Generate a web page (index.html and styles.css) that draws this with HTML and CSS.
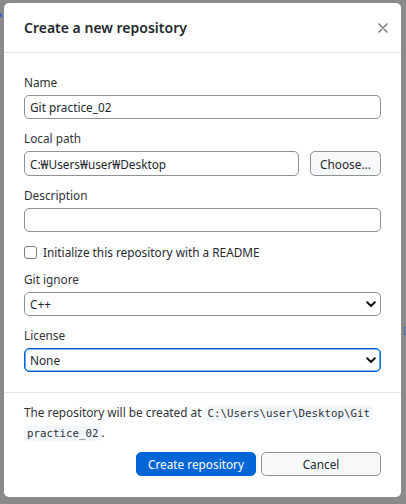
FILE: index.html
```html
<!DOCTYPE html>
<html>
  <head>
    <meta charset="UTF-8" />
    <title>Create a new repository</title>
    <link rel="stylesheet" href="styles.css">
  </head>
  <body>
    <div class="backdrop-marks">
      <span class="mark mark-left"></span>
      <span class="mark mark-right"></span>
    </div>
    <div class="dialog" role="dialog" aria-labelledby="dialog-title">
      <div class="dialog-header">
        <h1 id="dialog-title">Create a new repository</h1>
        <button class="close-button" aria-label="Close">
          <svg width="10" height="10" viewBox="0 0 10 10">
            <path d="M1 1 L9 9 M9 1 L1 9" stroke="#6e7073" stroke-width="1.4" stroke-linecap="round" fill="none"/>
          </svg>
        </button>
      </div>

      <form class="dialog-body">
        <div class="field">
          <label for="name">Name</label>
          <input id="name" type="text" value="Git practice_02" />
        </div>

        <div class="field">
          <label for="path">Local path</label>
          <div class="path-row">
            <input id="path" type="text" value="C:₩Users₩user₩Desktop" />
            <button type="button" class="button-secondary choose">Choose...</button>
          </div>
        </div>

        <div class="field">
          <label for="description">Description</label>
          <input id="description" type="text" />
        </div>

        <div class="checkbox-group">
          <input id="readme" type="checkbox" />
          <label for="readme">Initialize this repository with a README</label>
        </div>

        <div class="field">
          <label for="gitignore">Git ignore</label>
          <select id="gitignore">
            <option>C++</option>
          </select>
        </div>

        <div class="field">
          <label for="license">License</label>
          <select id="license" class="focused">
            <option>None</option>
          </select>
        </div>
      </form>

      <div class="dialog-footer">
        <p class="summary">The repository will be created at <code>C:\Users\user\Desktop\Git practice_02</code>.</p>
        <div class="button-group">
          <button class="button-primary">Create repository</button>
          <button class="button-secondary">Cancel</button>
        </div>
      </div>
    </div>
  </body>
</html>
```

FILE: styles.css
```css
:root {
  --backdrop: #8a8a8a;
  --bg-color: #ffffff;
  --text-color: #24292e;
  --border-color: #8d9196;
  --divider: #e1e4e8;
  --secondary-bg: #f6f8fa;
  --primary-color: #0366d6;
  --code-bg: #f1f6fd;
}

* {
  box-sizing: border-box;
}

body {
  margin: 0;
  width: 406px;
  height: 504px;
  padding: 3px 5px 7px 4px;
  background-color: var(--backdrop);
  font-family: "Noto Sans", "Noto Sans CJK KR", sans-serif;
  font-size: 11.8px;
  color: var(--text-color);
  position: relative;
  overflow: hidden;
}

/* bits of the window behind the dialog */
.mark {
  position: absolute;
  display: block;
}

.mark-left {
  left: 0;
  top: 13px;
  width: 2px;
  height: 4px;
  background-color: #3b6fc4;
}

.mark-right {
  right: 0;
  top: 327px;
  width: 2px;
  height: 8px;
  border: 1px solid #3b6fc4;
  border-right: none;
}

.dialog {
  position: relative;
  height: 100%;
  background-color: var(--bg-color);
  border-radius: 5px;
  display: flex;
  flex-direction: column;
}

.dialog-header {
  display: flex;
  align-items: center;
  justify-content: space-between;
  height: 50px;
  padding: 0 9px 0 20px;
  border-bottom: 1px solid var(--divider);
}

.dialog-header h1 {
  margin: 0;
  font-size: 14px;
  font-weight: 600;
  color: #24292e;
}

.close-button {
  background: none;
  border: none;
  padding: 4px;
  display: flex;
  cursor: pointer;
}

.dialog-body {
  display: flex;
  flex-direction: column;
  gap: 12px;
  padding: 22px 20px 20px 20px;
  border-bottom: 1px solid var(--divider);
}

.field {
  display: flex;
  flex-direction: column;
}

.field label {
  line-height: 14px;
  margin-bottom: 6px;
  color: #2f3337;
}

input[type="text"],
select {
  height: 24px;
  width: 100%;
  padding: 0 5px;
  border: 1px solid var(--border-color);
  border-radius: 5px;
  font-family: inherit;
  font-size: 11.8px;
  color: var(--text-color);
  background-color: var(--bg-color);
}

select {
  appearance: none;
  padding-right: 24px;
  background-image: url("data:image/svg+xml,%3Csvg xmlns='http://www.w3.org/2000/svg' width='10' height='7' viewBox='0 0 10 7'%3E%3Cpath d='M1.2 1.3 L5 5 L8.8 1.3' stroke='%23111' stroke-width='2' fill='none' stroke-linecap='round' stroke-linejoin='round'/%3E%3C/svg%3E");
  background-repeat: no-repeat;
  background-position: right 4px center;
}

select.focused {
  border-color: var(--primary-color);
  box-shadow: inset 0 0 0 0.6px var(--primary-color);
}

.path-row {
  display: flex;
  gap: 11px;
}

.path-row input {
  flex: 1;
  height: 25px;
}

button {
  font-family: inherit;
  font-size: 11.8px;
  border-radius: 5px;
  cursor: pointer;
}

.button-secondary {
  background-color: var(--secondary-bg);
  color: var(--text-color);
  border: 1px solid var(--border-color);
}

.choose {
  width: 71px;
  height: 25px;
  padding: 0;
}

.checkbox-group {
  display: flex;
  align-items: center;
  gap: 6px;
  height: 16px;
}

.checkbox-group input {
  appearance: none;
  margin: 0;
  width: 13px;
  height: 13px;
  border: 1px solid #7b7f84;
  border-radius: 3px;
  background-color: var(--bg-color);
}

.checkbox-group label {
  line-height: 16px;
}

.dialog-footer {
  padding: 10px 20px 0 20px;
}

.summary {
  margin: 0;
  line-height: 19px;
  color: #2f3337;
}

.summary code {
  font-family: "DejaVu Sans Mono", monospace;
  font-size: 10.8px;
  background-color: var(--code-bg);
  border-radius: 4px;
  padding: 1px 3px;
  box-decoration-break: clone;
  -webkit-box-decoration-break: clone;
}

.button-group {
  display: flex;
  justify-content: flex-end;
  gap: 5px;
  margin-top: 9px;
}

.button-group button {
  width: 120px;
  height: 24px;
  padding: 0;
}

.button-primary {
  background-color: var(--primary-color);
  border: 1px solid var(--primary-color);
  color: #ffffff;
}
```
